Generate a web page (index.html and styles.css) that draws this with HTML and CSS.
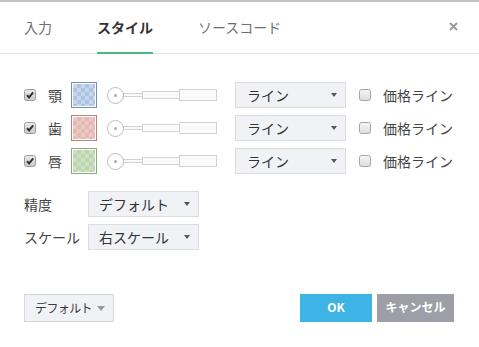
FILE: index.html
```html
<!DOCTYPE html>
<html lang="ja">
<head>
<meta charset="utf-8">
<link rel="stylesheet" href="styles.css">
</head>
<body>
<div class="dialog">
  <div class="tabs">
    <div class="tab">入力</div>
    <div class="tab active">スタイル</div>
    <div class="tab">ソースコード</div>
    <div class="close"><svg width="9" height="9" viewBox="0 0 9 9"><path d="M1 1L8 8M8 1L1 8" stroke="#9a9a9a" stroke-width="2"/></svg></div>
  </div>
  <div class="content">
    <div class="plot-row">
      <svg class="cb" width="12" height="12" viewBox="0 0 12 12"><defs><linearGradient id="g1" x1="0" y1="0" x2="0" y2="1"><stop offset="0" stop-color="#ececec"/><stop offset="1" stop-color="#c9c9c9"/></linearGradient></defs><rect x="0.5" y="0.5" width="11" height="11" rx="2" fill="url(#g1)" stroke="#9c9c9c"/><path d="M3 6.2L5 8.4L9.2 3.4" fill="none" stroke="#333" stroke-width="2"/></svg>
      <span class="plot-label">顎</span>
      <span class="swatch blue"><span class="fill"></span></span>
      <div class="slider"><span class="knob"></span><span class="seg s1"></span><span class="seg s2"></span><span class="seg s3"></span></div>
      <div class="select wide"><span>ライン</span><i class="arrow"></i></div>
      <svg class="cb2" width="12" height="12" viewBox="0 0 12 12"><defs><linearGradient id="g2" x1="0" y1="0" x2="0" y2="1"><stop offset="0" stop-color="#f6f6f6"/><stop offset="1" stop-color="#dcdcdc"/></linearGradient></defs><rect x="0.5" y="0.5" width="11" height="11" rx="2" fill="url(#g2)" stroke="#a5a5a5"/></svg>
      <span class="price">価格ライン</span>
    </div>
    <div class="plot-row">
      <svg class="cb" width="12" height="12" viewBox="0 0 12 12"><rect x="0.5" y="0.5" width="11" height="11" rx="2" fill="url(#g1)" stroke="#9c9c9c"/><path d="M3 6.2L5 8.4L9.2 3.4" fill="none" stroke="#333" stroke-width="2"/></svg>
      <span class="plot-label">歯</span>
      <span class="swatch red"><span class="fill"></span></span>
      <div class="slider"><span class="knob"></span><span class="seg s1"></span><span class="seg s2"></span><span class="seg s3"></span></div>
      <div class="select wide"><span>ライン</span><i class="arrow"></i></div>
      <svg class="cb2" width="12" height="12" viewBox="0 0 12 12"><rect x="0.5" y="0.5" width="11" height="11" rx="2" fill="url(#g2)" stroke="#a5a5a5"/></svg>
      <span class="price">価格ライン</span>
    </div>
    <div class="plot-row">
      <svg class="cb" width="12" height="12" viewBox="0 0 12 12"><rect x="0.5" y="0.5" width="11" height="11" rx="2" fill="url(#g1)" stroke="#9c9c9c"/><path d="M3 6.2L5 8.4L9.2 3.4" fill="none" stroke="#333" stroke-width="2"/></svg>
      <span class="plot-label">唇</span>
      <span class="swatch green"><span class="fill"></span></span>
      <div class="slider"><span class="knob"></span><span class="seg s1"></span><span class="seg s2"></span><span class="seg s3"></span></div>
      <div class="select wide"><span>ライン</span><i class="arrow"></i></div>
      <svg class="cb2" width="12" height="12" viewBox="0 0 12 12"><rect x="0.5" y="0.5" width="11" height="11" rx="2" fill="url(#g2)" stroke="#a5a5a5"/></svg>
      <span class="price">価格ライン</span>
    </div>
    <div class="options">
      <div class="opt-row"><span class="opt-label">精度</span><div class="select"><span>デフォルト</span><i class="arrow"></i></div></div>
      <div class="opt-row"><span class="opt-label">スケール</span><div class="select"><span>右スケール</span><i class="arrow"></i></div></div>
    </div>
  </div>
  <div class="footer">
    <div class="defaults"><span>デフォルト</span><i class="arrow big"></i></div>
    <div class="actions">
      <div class="btn ok">OK</div>
      <div class="btn cancel">キャンセル</div>
    </div>
  </div>
</div>
</body>
</html>
```
FILE: styles.css
```css
* { box-sizing: border-box; }
html, body { margin: 0; padding: 0; background: #fff; }
body {
  font-family: "Noto Sans CJK JP", "Liberation Sans", sans-serif;
  font-size: 14px;
  color: #3a3a3a;
}
.dialog {
  width: 479px;
  height: 347px;
  border-top: 2px solid #c2c2c2;
}
.tabs {
  display: flex;
  height: 52px;
  border-bottom: 1px solid #e3e3e3;
  padding: 0 21px 0 24px;
  gap: 45px;
}
.tab {
  height: 52px;
  margin-bottom: -1px;
  display: flex;
  align-items: center;
  color: #707070;
  border-bottom: 2px solid transparent;
  line-height: 1;
}
.tab.active {
  color: #333;
  font-weight: bold;
  border-bottom-color: #4fb887;
}
.close {
  margin-left: auto;
  display: flex;
  align-items: center;
  height: 48px;
}
.content {
  padding: 28px 24px 0 24px;
}
.plot-row {
  display: flex;
  align-items: center;
  height: 26px;
  margin-bottom: 7px;
}
.cb { flex: none; display: block; }
.plot-label {
  margin-left: 12px;
  width: 14px;
  line-height: 1;
  color: #444;
}
.swatch {
  margin-left: 9px;
  width: 26px;
  height: 26px;
  padding: 1px;
  border: 1px solid;
  background: #fff;
  display: block;
}
.swatch .fill { display: block; width: 100%; height: 100%; background-size: 8px 8px; }
.swatch.blue { border-color: #7390ad; }
.swatch.blue .fill { background-color: #b9cbe5; background-image: repeating-conic-gradient(#aec3e0 0 25%, #c7d6ec 0 50%); }
.swatch.red { border-color: #bb8378; }
.swatch.red .fill { background-image: repeating-conic-gradient(#e2b8b2 0 25%, #ecc9c4 0 50%); }
.swatch.green { border-color: #8ea67c; }
.swatch.green .fill { background-image: repeating-conic-gradient(#bcd5b0 0 25%, #cde2c3 0 50%); }
.slider {
  margin-left: 10px;
  display: flex;
  align-items: center;
}
.knob {
  width: 17px;
  height: 17px;
  border: 1px solid #b9bcc3;
  border-radius: 50%;
  background: #fff;
  position: relative;
  flex: none;
}
.knob::after {
  content: "";
  position: absolute;
  left: 6px; top: 6px;
  width: 3px; height: 3px;
  border-radius: 50%;
  background: #a8abb2;
}
.seg {
  display: block;
  border: 1px solid #d2d2d2;
  background: #fafafa;
  margin-left: -1px;
}
.s1 { width: 20px; height: 4px; }
.s2 { width: 38px; height: 8px; }
.s3 { width: 38px; height: 12px; }
.select {
  display: flex;
  align-items: center;
  width: 111px;
  height: 26px;
  background: #f1f2f6;
  border: 1px solid #dcdde2;
  padding: 0 8px 0 10px;
  color: #333;
  line-height: 1;
  white-space: nowrap;
}
.select.wide { margin-left: 18px; padding-left: 11px; }
.arrow {
  margin-left: auto;
  width: 0; height: 0;
  border-left: 3.5px solid transparent;
  border-right: 3.5px solid transparent;
  border-top: 4px solid #555;
  flex: none;
}
.cb2 { margin-left: 13px; flex: none; display: block; }
.price { margin-left: 12px; color: #444; line-height: 1; }
.options { margin-top: 17px; }
.opt-row {
  display: flex;
  align-items: center;
  margin-bottom: 7px;
}
.opt-label { width: 64px; color: #444; line-height: 1; }
.footer {
  display: flex;
  justify-content: space-between;
  align-items: center;
  padding: 37px 25px 0 24px;
}
.defaults {
  display: flex;
  align-items: center;
  width: 90px;
  height: 28px;
  background: #f1f2f6;
  border: 1px solid #d6d7dc;
  padding: 0 8px 0 10px;
  color: #3a3a3a;
  font-size: 12px;
  letter-spacing: -0.6px;
  line-height: 1;
  white-space: nowrap;
}
.arrow.big {
  border-left-width: 4px;
  border-right-width: 4px;
  border-top: 5px solid #999;
}
.actions { display: flex; gap: 5px; }
.btn {
  height: 28px;
  display: flex;
  align-items: center;
  justify-content: center;
  color: #fff;
  font-weight: bold;
  font-size: 12px;
  line-height: 1;
  padding-bottom: 2px;
}
.btn.ok { width: 72px; background: #3db4e5; }
.btn.cancel { width: 77px; background: #9e9fa6; }
```
